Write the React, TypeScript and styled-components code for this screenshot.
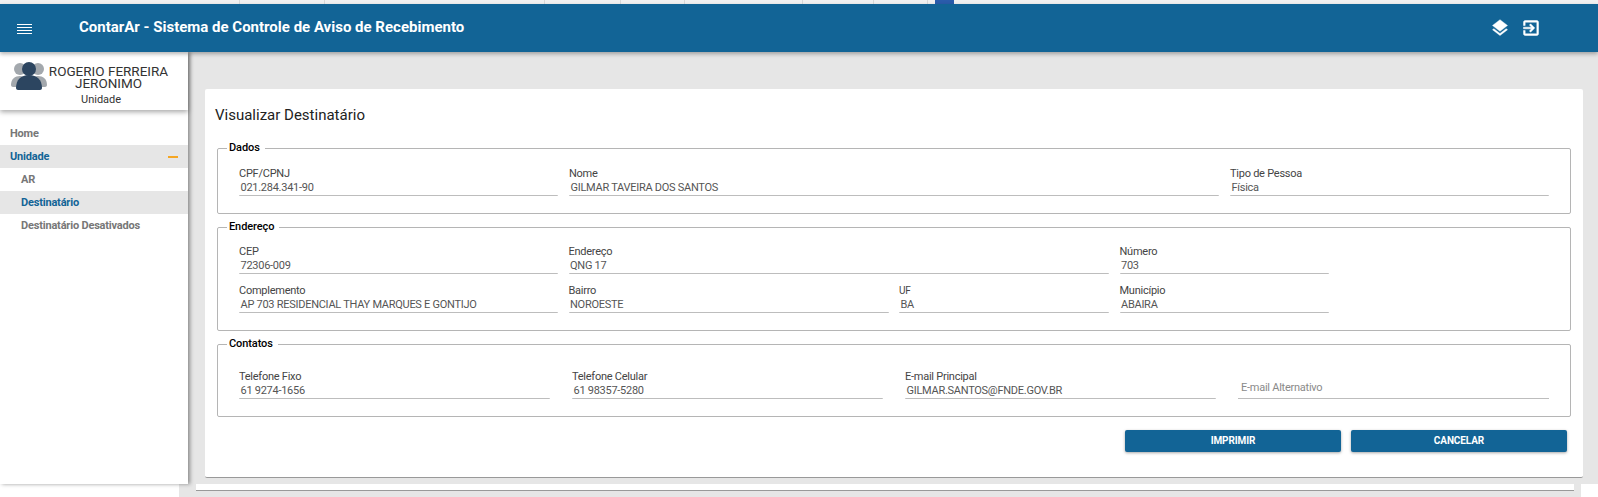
import { createGlobalStyle, styled } from "styled-components";

const GlobalStyle = createGlobalStyle`
    html, body {
        margin: 0;
        padding: 0;
        height: 497px;
        overflow: hidden;
        background: #fff;
        font-family: Roboto, "Liberation Sans", sans-serif;
    }
    * {
        box-sizing: border-box;
    }
`;

const tabs = [240, 85, 220, 76, 64, 118, 71, 54];

const menus = [
    { label: "Home", sub: false, active: false, open: false },
    { label: "Unidade", sub: false, active: true, open: true },
    { label: "AR", sub: true, active: false, open: false },
    { label: "Destinatário", sub: true, active: true, open: false },
    { label: "Destinatário Desativados", sub: true, active: false, open: false }
];

const Avatar = () => (
    <svg width="36" height="30" viewBox="0 0 36 30">
        <g fill="#a3a8ad">
            <circle cx="9" cy="9" r="6" />
            <path d="M0 25c0-6 4-9 9-9s9 3 9 9c0 1-1 2-2 2H2c-1 0-2-1-2-2z" />
            <circle cx="27" cy="9" r="6" />
            <path d="M18 25c0-6 4-9 9-9s9 3 9 9c0 1-1 2-2 2H20c-1 0-2-1-2-2z" />
        </g>
        <circle cx="18" cy="9" r="7" fill="#2c4560" />
        <path d="M5 28c0-8 5-13 13-13s13 5 13 13c0 1-1 2-2 2H7c-1 0-2-1-2-2z" fill="#2c4560" />
    </svg>
);

const MenuIcon = () => (
    <svg width="15" height="10" viewBox="0 0 15 10">
        <path d="M0 .5h15M0 3.5h15M0 6.5h15M0 9.5h15" stroke="#fff" strokeWidth="1" />
    </svg>
);

const LayersIcon = () => (
    <svg width="20" height="20" viewBox="0 0 24 24" fill="#fff" stroke="#fff" strokeWidth="0.5">
        <path d="M11.99 18.54l-7.37-5.73L3 14.07l9 7 9-7-1.63-1.27-7.38 5.74zM12 16l7.36-5.73L21 9l-9-7-9 7 1.63 1.27L12 16z" />
    </svg>
);

const ExitIcon = () => (
    <svg width="20" height="20" viewBox="0 0 24 24" fill="#fff" stroke="#fff" strokeWidth="0.6">
        <path d="M10.09 15.59L11.5 17l5-5-5-5-1.41 1.41L12.67 11H3v2h9.67l-2.58 2.59zM19 3H5c-1.11 0-2 .9-2 2v4h2V5h14v14H5v-4H3v4c0 1.1.89 2 2 2h14c1.1 0 2-.9 2-2V5c0-1.1-.9-2-2-2z" />
    </svg>
);

const App = () => {
    return (
        <Page>
            <GlobalStyle />
            <TopStrip>
                {tabs.map((w, i) => <BrowserTab key={i} $width={w} />)}
                <BlueTab />
            </TopStrip>
            <Header>
                <MenuToggle><MenuIcon /></MenuToggle>
                <Title>ContarAr - Sistema de Controle de Aviso de Recebimento</Title>
                <HeaderIcons>
                    <LayersIcon />
                    <ExitIcon />
                </HeaderIcons>
            </Header>
            <Body>
                <Sidebar>
                    <UserPanel>
                        <Avatar />
                        <UserName>ROGERIO FERREIRA<br />JERONIMO</UserName>
                        <UserUnit>Unidade</UserUnit>
                    </UserPanel>
                    <Menu>
                        {menus.map((m) => (
                            <MenuItem key={m.label} $sub={m.sub} $active={m.active}>
                                {m.label}
                                {m.open && <OpenDash />}
                            </MenuItem>
                        ))}
                    </Menu>
                </Sidebar>
                <Main>
                    <Card>
                        <CardTitle>Visualizar Destinatário</CardTitle>
                        <Group $top={11} $bottom={17}>
                            <Legend>Dados</Legend>
                            <Row $columns="319px 650px 319px">
                                <Field label="CPF/CPNJ" value="021.284.341-90" />
                                <Field label="Nome" value="GILMAR TAVEIRA DOS SANTOS" />
                                <Field label="Tipo de Pessoa" value="Física" />
                            </Row>
                        </Group>
                        <Group $top={10} $bottom={17}>
                            <Legend>Endereço</Legend>
                            <Row $columns="319px 320px 210px 209px" $gap={10.5}>
                                <Field label="CEP" value="72306-009" />
                                <WideField label="Endereço" value="QNG 17" />
                                <Field label="Número" value="703" />
                                <Field label="Complemento" value="AP 703 RESIDENCIAL THAY MARQUES E GONTIJO" />
                                <Field label="Bairro" value="NOROESTE" />
                                <Field label="UF" value="BA" small />
                                <Field label="Município" value="ABAIRA" />
                            </Row>
                        </Group>
                        <Group $top={18} $bottom={17}>
                            <Legend>Contatos</Legend>
                            <Row $columns="repeat(4, 311px)" $gap={22}>
                                <Field label="Telefone Fixo" value="61 9274-1656" />
                                <Field label="Telefone Celular" value="61 98357-5280" />
                                <Field label="E-mail Principal" value="GILMAR.SANTOS@FNDE.GOV.BR" />
                                <EmptyField>E-mail Alternativo</EmptyField>
                            </Row>
                        </Group>
                        <Actions>
                            <ActionButton>Imprimir</ActionButton>
                            <ActionButton>Cancelar</ActionButton>
                        </Actions>
                    </Card>
                </Main>
            </Body>
            <BottomStrip>
                <BottomSheet />
            </BottomStrip>
        </Page>
    );
};

type FieldProps = { label: string; value: string; small?: boolean };

const Field = ({ label, value, small }: FieldProps) => (
    <FieldBox>
        <FieldLabel $small={small}>{label}</FieldLabel>
        <FieldValue>{value}</FieldValue>
    </FieldBox>
);

const WideField = ({ label, value }: FieldProps) => (
    <FieldSpan>
        <Field label={label} value={value} />
    </FieldSpan>
);

export default App;

const Page = styled.div`
    width: 1598px;
    height: 497px;
    display: flex;
    flex-direction: column;
    overflow: hidden;
`;

const TopStrip = styled.div`
    height: 4px;
    display: flex;
    background: #f1f1f1;
`;

const BrowserTab = styled.div<{ $width: number }>`
    width: ${(p) => p.$width}px;
    height: 4px;
    border-right: 1px solid #d9d9d9;
`;

const BlueTab = styled.div`
    width: 19px;
    margin-left: 7px;
    height: 4px;
    background: #2a5cab;
`;

const Header = styled.header`
    height: 48px;
    display: flex;
    align-items: center;
    background: #126496;
    color: #fff;
    position: relative;
    z-index: 3;
    box-shadow: 0 2px 4px rgba(0, 0, 0, 0.3);
`;

const MenuToggle = styled.div`
    width: 79px;
    padding: 2px 0 0 17px;
    display: flex;
`;

const Title = styled.h1`
    margin: 0 0 2px;
    font-size: 15px;
    font-weight: 700;
    flex: 1;
`;

const HeaderIcons = styled.div`
    display: flex;
    gap: 11px;
    margin-right: 57px;
`;

const Body = styled.div`
    height: 432px;
    display: flex;
`;

const Sidebar = styled.aside`
    width: 188px;
    background: #fff;
    position: relative;
    z-index: 2;
    box-shadow: 2px 0 4px rgba(0, 0, 0, 0.4);
`;

const UserPanel = styled.div`
    height: 58px;
    position: relative;
    display: grid;
    grid-template-columns: 36px 1fr;
    padding: 8px 0 0 11px;
    box-shadow: 0 2px 5px rgba(0, 0, 0, 0.35);
`;

const UserName = styled.div`
    font-size: 13.5px;
    line-height: 12px;
    color: #333;
    text-align: center;
    padding: 5px 18px 0 0;
`;

const UserUnit = styled.div`
    position: absolute;
    left: 81px;
    top: 42px;
    font-size: 11px;
    line-height: 12px;
    color: #333;
`;

const Menu = styled.nav`
    margin-top: 12px;
    display: flex;
    flex-direction: column;
`;

const MenuItem = styled.div<{ $sub: boolean; $active: boolean }>`
    height: 23px;
    display: flex;
    align-items: center;
    justify-content: space-between;
    padding: 0 10px 1px ${(p) => (p.$sub ? 21 : 10)}px;
    font-size: 11px;
    letter-spacing: -0.19px;
    font-weight: 700;
    color: ${(p) => (p.$active ? "#126496" : "#777")};
    background: ${(p) => (p.$active ? "#e6e6e6" : "transparent")};
`;

const OpenDash = styled.span`
    width: 10px;
    height: 2px;
    margin-top: 1px;
    background: #f5a623;
`;

const Main = styled.main`
    flex: 1;
    background: #e6e6e6;
    padding: 37px 15px 6px 17px;
`;

const Card = styled.section`
    height: 389px;
    background: #fff;
    padding: 0 12px;
    border-bottom: 1px solid #999;
    border-radius: 2px;
`;

const CardTitle = styled.h2`
    margin: 0 0 0 -2px;
    height: 52px;
    padding-top: 17px;
    font-size: 15px;
    line-height: 18px;
    font-weight: 400;
    color: #222;
`;

const Group = styled.fieldset<{ $top: number; $bottom: number }>`
    margin: 0 0 6px;
    min-width: 0;
    border: 1px solid #b5b5b5;
    border-radius: 2px;
    padding: ${(p) => p.$top}px 21px ${(p) => p.$bottom}px;
`;

const Legend = styled.legend`
    margin-left: -12px;
    padding: 0 5px 0 2px;
    height: 14px;
    font-size: 11px;
    letter-spacing: -0.1px;
    line-height: 14px;
    font-weight: 500;
    color: #000;
`;

const Row = styled.div<{ $columns: string; $gap?: number }>`
    display: grid;
    grid-template-columns: ${(p) => p.$columns};
    column-gap: ${(p) => p.$gap ?? 11}px;
    row-gap: 9px;
`;

const FieldBox = styled.div`
    height: 30px;
    padding-top: 1px;
    border-bottom: 1px solid #bdbdbd;
    border-radius: 1px;
`;

const FieldSpan = styled.div`
    grid-column: span 2;
`;

const FieldLabel = styled.div<{ $small?: boolean }>`
    height: 14px;
    font-size: ${(p) => (p.$small ? 10 : 11)}px;
    letter-spacing: -0.25px;
    line-height: 14px;
    color: #444;
`;

const FieldValue = styled.div`
    height: 14px;
    padding-left: 1.5px;
    font-size: 11px;
    letter-spacing: -0.27px;
    line-height: 14px;
    color: #555;
`;

const EmptyField = styled.div`
    height: 30px;
    padding: 12px 0 0 3px;
    border-bottom: 1px solid #bdbdbd;
    font-size: 11px;
    letter-spacing: -0.25px;
    line-height: 14px;
    color: #8a8a8a;
`;

const Actions = styled.div`
    display: flex;
    justify-content: flex-end;
    gap: 10px;
    margin-top: 13px;
    padding-right: 4px;
`;

const ActionButton = styled.button`
    width: 216px;
    height: 22px;
    padding: 0 0 2px;
    border: 0;
    border-radius: 2px;
    background: #126496;
    color: #fff;
    font-family: inherit;
    font-size: 10px;
    letter-spacing: -0.1px;
    font-weight: 700;
    text-transform: uppercase;
    box-shadow: 0 1px 3px rgba(0, 0, 0, 0.35);
`;

const BottomStrip = styled.div`
    height: 13px;
    margin: 0 17px 0 179px;
    padding: 0 7px 0 17px;
    background: #e6e6e6;
`;

const BottomSheet = styled.div`
    height: 7px;
    background: #fff;
    border-bottom: 1px solid #999;
`;
